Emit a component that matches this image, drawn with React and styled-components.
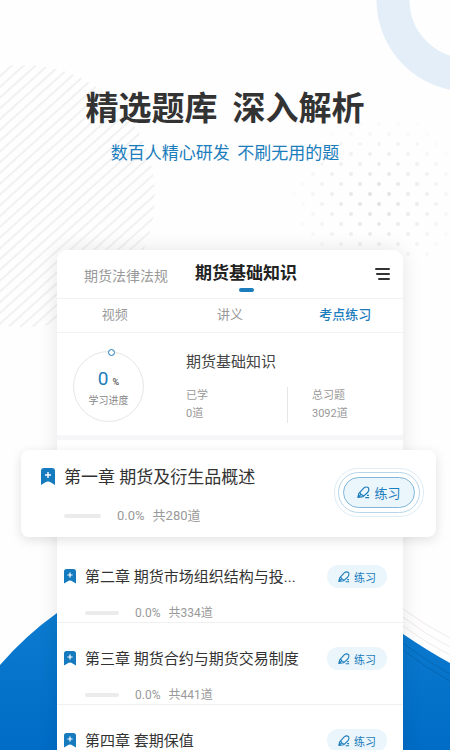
import React from "react";
import styled, { createGlobalStyle } from "styled-components";

const CHAPTERS = [
  { id: 2, title: "第二章 期货市场组织结构与投...", total: 334 },
  { id: 3, title: "第三章 期货合约与期货交易制度", total: 441 },
  { id: 4, title: "第四章 套期保值", total: 205 },
];

const DOT_CENTER = { x: 108, y: 92 };

function getDots() {
  const dots = [];
  for (let row = 0; row < 16; row++) {
    for (let col = 0; col < 12; col++) {
      const x = col * 19 + (row % 2 ? 9 : 0) + 5;
      const y = row * 10 + 6;
      const distance = Math.hypot(x - DOT_CENTER.x, y - DOT_CENTER.y);
      const opacity = 1 - distance / 90;
      if (opacity > 0) {
        dots.push({ x, y, opacity });
      }
    }
  }
  return dots;
}

export default function App() {
  return (
    <>
      <GlobalStyle />
      <Page>
        <Stripes />
        <Ring />
        <Dots />
        <Wave />
        <Intro>
          <Title>精选题库&nbsp; 深入解析</Title>
          <Subtitle>数百人精心研发&nbsp; 不刷无用的题</Subtitle>
        </Intro>
        <Panel>
          <Subjects>
            <Subject href="#law">期货法律法规</Subject>
            <SubjectActive href="#basic" aria-current="page">
              期货基础知识
            </SubjectActive>
            <MenuButton type="button" aria-label="菜单">
              <MenuIcon />
            </MenuButton>
          </Subjects>
          <Tabs>
            <Tab type="button">视频</Tab>
            <Tab type="button">讲义</Tab>
            <Tab type="button" $active>
              考点练习
            </Tab>
          </Tabs>
          <Summary>
            <Progress>
              <ProgressValue>
                0<small>%</small>
              </ProgressValue>
              <ProgressLabel>学习进度</ProgressLabel>
            </Progress>
            <div>
              <SummaryTitle>期货基础知识</SummaryTitle>
              <Stats>
                <Stat>
                  已学
                  <br />
                  0道
                </Stat>
                <Stat>
                  总习题
                  <br />
                  3092道
                </Stat>
              </Stats>
            </div>
          </Summary>
          <Featured>
            <Chapter title="第一章 期货及衍生品概述" total={280} large />
          </Featured>
          <List>
            {CHAPTERS.map((e) => (
              <Row key={e.id}>
                <Chapter title={e.title} total={e.total} />
              </Row>
            ))}
          </List>
        </Panel>
      </Page>
    </>
  );
}

function Chapter({ title, total, large }) {
  return (
    <>
      <BookmarkIcon $large={large} />
      <ChapterInfo>
        <ChapterTitle $large={large}>{title}</ChapterTitle>
        <ChapterMeta $large={large}>
          <Bar $large={large} />
          <span>0.0%</span>
          <span>共{total}道</span>
        </ChapterMeta>
      </ChapterInfo>
      <PracticeButton type="button" $large={large}>
        <PenIcon />
        练习
      </PracticeButton>
    </>
  );
}

function Stripes() {
  return (
    <StripesSvg viewBox="0 0 157 264" aria-hidden="true">
      <defs>
        <pattern
          id="stripes"
          width="8"
          height="8"
          patternUnits="userSpaceOnUse"
          patternTransform="rotate(-42)"
        >
          <rect width="8" height="2" fill="#f1f1f1" />
        </pattern>
      </defs>
      <circle cx="24" cy="132" r="131" fill="url(#stripes)" />
    </StripesSvg>
  );
}

function Ring() {
  return (
    <RingSvg viewBox="0 0 74 92" aria-hidden="true">
      <circle cx="92" cy="0" r="75" fill="none" stroke="#e3eef8" strokeWidth="33" />
    </RingSvg>
  );
}

function Dots() {
  return (
    <DotsSvg viewBox="0 0 180 150" aria-hidden="true">
      {getDots().map((e) => (
        <circle key={`${e.x}-${e.y}`} cx={e.x} cy={e.y} r="2" fill="#e0e0e0" opacity={e.opacity} />
      ))}
    </DotsSvg>
  );
}

function Wave() {
  return (
    <WaveSvg viewBox="0 0 450 190" preserveAspectRatio="none" aria-hidden="true">
      <defs>
        <linearGradient id="sea" x1="0" y1="0" x2="0" y2="1">
          <stop offset="0" stopColor="#0f80d2" />
          <stop offset="1" stopColor="#006cc6" />
        </linearGradient>
      </defs>
      <path d="M0 105Q26 75 57 53Q220 -40 403 74Q428 91 450 103V190H0Z" fill="url(#sea)" />
      <g fill="none" stroke="#f0ebe9">
        <path d="M403 49Q426 66 450 78" />
        <path d="M403 57Q426 75 450 87" />
        <path d="M403 66Q426 83 450 95" />
      </g>
      <g fill="none" stroke="#0668b4">
        <path d="M403 83Q426 101 450 114" />
        <path d="M403 90Q426 108 450 121" />
      </g>
    </WaveSvg>
  );
}

function MenuIcon() {
  return (
    <svg width="16" height="14" viewBox="0 0 16 14" fill="none" stroke="#333" strokeWidth="2">
      <path d="M2 2H15M3 7H15M5 12H15" strokeLinecap="round" />
    </svg>
  );
}

function BookmarkIcon(props) {
  return (
    <BookmarkSvg viewBox="0 0 14 17" aria-hidden="true" {...props}>
      <path d="M3 0H11Q14 0 14 3V17L10 14.500Q7 12.500 4 14.500L0 17V3Q0 0 3 0Z" fill="#167abf" />
      <path d="M7 4V10M4 7H10" stroke="#fff" strokeWidth="1.400" />
    </BookmarkSvg>
  );
}

function PenIcon() {
  return (
    <svg viewBox="0 0 12 12" fill="none" stroke="currentColor" strokeWidth="1.100" aria-hidden="true">
      <path
        d="M0.800 10.500L1.700 6.800L6.200 1.900Q8.600 0.100 10.500 1.600Q11.600 3.600 9.800 6L5.600 9.800L0.800 10.500ZM2.600 5.900Q3.200 8 6.200 9.200M1 10.400L3.400 8"
        strokeLinejoin="round"
      />
      <path d="M7.600 10.800H11.200M9.200 8.600H11" />
    </svg>
  );
}

const GlobalStyle = createGlobalStyle`
  * {
    box-sizing: border-box;
  }

  body {
    margin: 0;
    background: #fff;
    font-family: Roboto, "Noto Sans CJK SC", sans-serif;
  }

  button {
    padding: 0;
    border: 0;
    background: none;
    font-family: inherit;
    cursor: pointer;
  }

  h1, h2, h3, p, ul {
    margin: 0;
    padding: 0;
  }
`;

const Page = styled.main`
  position: relative;
  isolation: isolate;
  height: 100vh;
  overflow: hidden;
  background: #fefefe;
`;

const StripesSvg = styled.svg`
  position: absolute;
  z-index: -1;
  top: 64px;
  left: 0;
  width: 157px;
`;

const RingSvg = styled.svg`
  position: absolute;
  z-index: -1;
  top: 0;
  right: 0;
  width: 74px;
`;

const DotsSvg = styled.svg`
  position: absolute;
  z-index: -1;
  top: 108px;
  right: 0;
  width: 180px;
`;

const WaveSvg = styled.svg`
  position: absolute;
  z-index: -1;
  bottom: 0;
  left: 0;
  width: 100%;
  height: 190px;
`;

const Intro = styled.header`
  padding: 82px 0 86px;
  text-align: center;
  font-family: "Noto Sans CJK SC", sans-serif;
`;

const Title = styled.h1`
  font-size: 33px;
  line-height: 48px;
  font-weight: 700;
  color: #333;
`;

const Subtitle = styled.p`
  margin-top: 10px;
  font-size: 17px;
  line-height: 24px;
  color: #1b7dbc;
`;

const Panel = styled.section`
  margin: 0 47px 0 57px;
  border-radius: 10px 10px 0 0;
  background: #fff;
  box-shadow: 0 0 20px rgba(0, 0, 0, 0.1);
`;

const Subjects = styled.nav`
  display: flex;
  align-items: center;
  height: 49px;
  padding: 0 13px 0 27px;
  border-bottom: 1px solid #f2f2f2;
`;

const Subject = styled.a`
  padding-top: 4px;
  font-size: 14px;
  line-height: 20px;
  color: #999;
  text-decoration: none;
`;

const SubjectActive = styled.a`
  display: flex;
  flex-direction: column;
  align-items: center;
  gap: 3px;
  margin: 4px auto 0 27px;
  font-size: 17px;
  line-height: 24px;
  font-weight: 700;
  color: #222;
  text-decoration: none;

  &::after {
    content: "";
    width: 15px;
    height: 4px;
    border-radius: 2px;
    background: #1b7dbc;
  }
`;

const MenuButton = styled.button`
  display: flex;
`;

const Tabs = styled.div`
  display: grid;
  grid-template-columns: repeat(3, 1fr);
  height: 34px;
  padding-bottom: 2px;
  border-bottom: 1px solid #f2f2f2;
`;

const Tab = styled.button`
  font-size: 13px;
  line-height: 20px;
  font-weight: ${(props) => (props.$active ? 500 : 400)};
  color: ${(props) => (props.$active ? "#1b7dbc" : "#999")};
`;

const Summary = styled.div`
  display: flex;
  gap: 42px;
  height: 107px;
  padding: 18px 16px 0;
  border-bottom: 5px solid #f6f6f8;
`;

const Progress = styled.div`
  position: relative;
  flex-shrink: 0;
  width: 71px;
  height: 71px;
  padding-top: 16px;
  border: 1px solid #e6e6e6;
  border-radius: 50%;
  text-align: center;

  &::before {
    content: "";
    position: absolute;
    top: -3px;
    left: 34px;
    width: 5px;
    height: 5px;
    border: 1px solid #1b7dbc;
    border-radius: 50%;
    background: #fff;
  }
`;

const ProgressValue = styled.p`
  font-size: 19px;
  line-height: 22px;
  color: #1b7dbc;

  small {
    margin-left: 4px;
    font-size: 9px;
    color: #333;
  }
`;

const ProgressLabel = styled.p`
  font-size: 10px;
  line-height: 16px;
  color: #888;
`;

const SummaryTitle = styled.h2`
  font-size: 15px;
  line-height: 22px;
  font-weight: 400;
  color: #444;
`;

const Stats = styled.div`
  display: flex;
  margin-top: 14px;
`;

const Stat = styled.p`
  width: 101px;
  font-size: 11px;
  line-height: 18px;
  color: #999;

  & + & {
    padding-left: 24px;
    border-left: 1px solid #e6e6e6;
  }
`;

const Featured = styled.article`
  position: relative;
  display: flex;
  align-items: flex-start;
  margin: 10px -33px 0 -36px;
  height: 87px;
  padding: 18px 21px 0 20px;
  border-radius: 8px;
  background: #fff;
  box-shadow: 0 3px 12px rgba(0, 0, 0, 0.12);

  button {
    margin-top: 9px;
  }
`;

const List = styled.ul`
  padding-top: 4px;
  list-style: none;
`;

const Row = styled.li`
  display: flex;
  align-items: flex-start;
  height: 82px;
  padding: 24px 16px 0 7px;
  border-bottom: 1px solid #f0f0f0;
`;

const BookmarkSvg = styled.svg`
  flex-shrink: 0;
  width: ${(props) => (props.$large ? "14px" : "12px")};
  margin-top: ${(props) => (props.$large ? "0" : "4px")};
`;

const ChapterInfo = styled.div`
  flex-grow: 1;
  margin-left: 9px;
`;

const ChapterTitle = styled.h3`
  font-size: ${(props) => (props.$large ? "17px" : "15px")};
  line-height: ${(props) => (props.$large ? "18px" : "24px")};
  font-weight: 400;
  color: #333;
  white-space: nowrap;
`;

const ChapterMeta = styled.p`
  display: flex;
  align-items: center;
  gap: 8px;
  margin-top: ${(props) => (props.$large ? "22px" : "16px")};
  font-size: ${(props) => (props.$large ? "13px" : "12px")};
  line-height: 16px;
  color: #999;
`;

const Bar = styled.span`
  width: ${(props) => (props.$large ? "37px" : "34px")};
  height: 4px;
  margin-right: 8px;
  border-radius: 2px;
  background: #ebebeb;
`;

const PracticeButton = styled.button`
  position: relative;
  display: flex;
  align-items: center;
  justify-content: center;
  gap: 4px;
  flex-shrink: 0;
  width: ${(props) => (props.$large ? "72px" : "60px")};
  height: ${(props) => (props.$large ? "31px" : "23px")};
  border: ${(props) => (props.$large ? "1px solid #7fb6d9" : "0")};
  border-radius: 16px;
  background: #ebf5fc;
  font-size: ${(props) => (props.$large ? "13px" : "11px")};
  color: #1b7dbc;

  svg {
    width: ${(props) => (props.$large ? "13px" : "12px")};
  }

  &::before,
  &::after {
    content: "";
    display: ${(props) => (props.$large ? "block" : "none")};
    position: absolute;
    inset: -6px;
    border: 1px solid #b5d6ea;
    border-radius: 24px;
  }

  &::after {
    inset: -10px;
    border-color: #deedf6;
  }
`;
